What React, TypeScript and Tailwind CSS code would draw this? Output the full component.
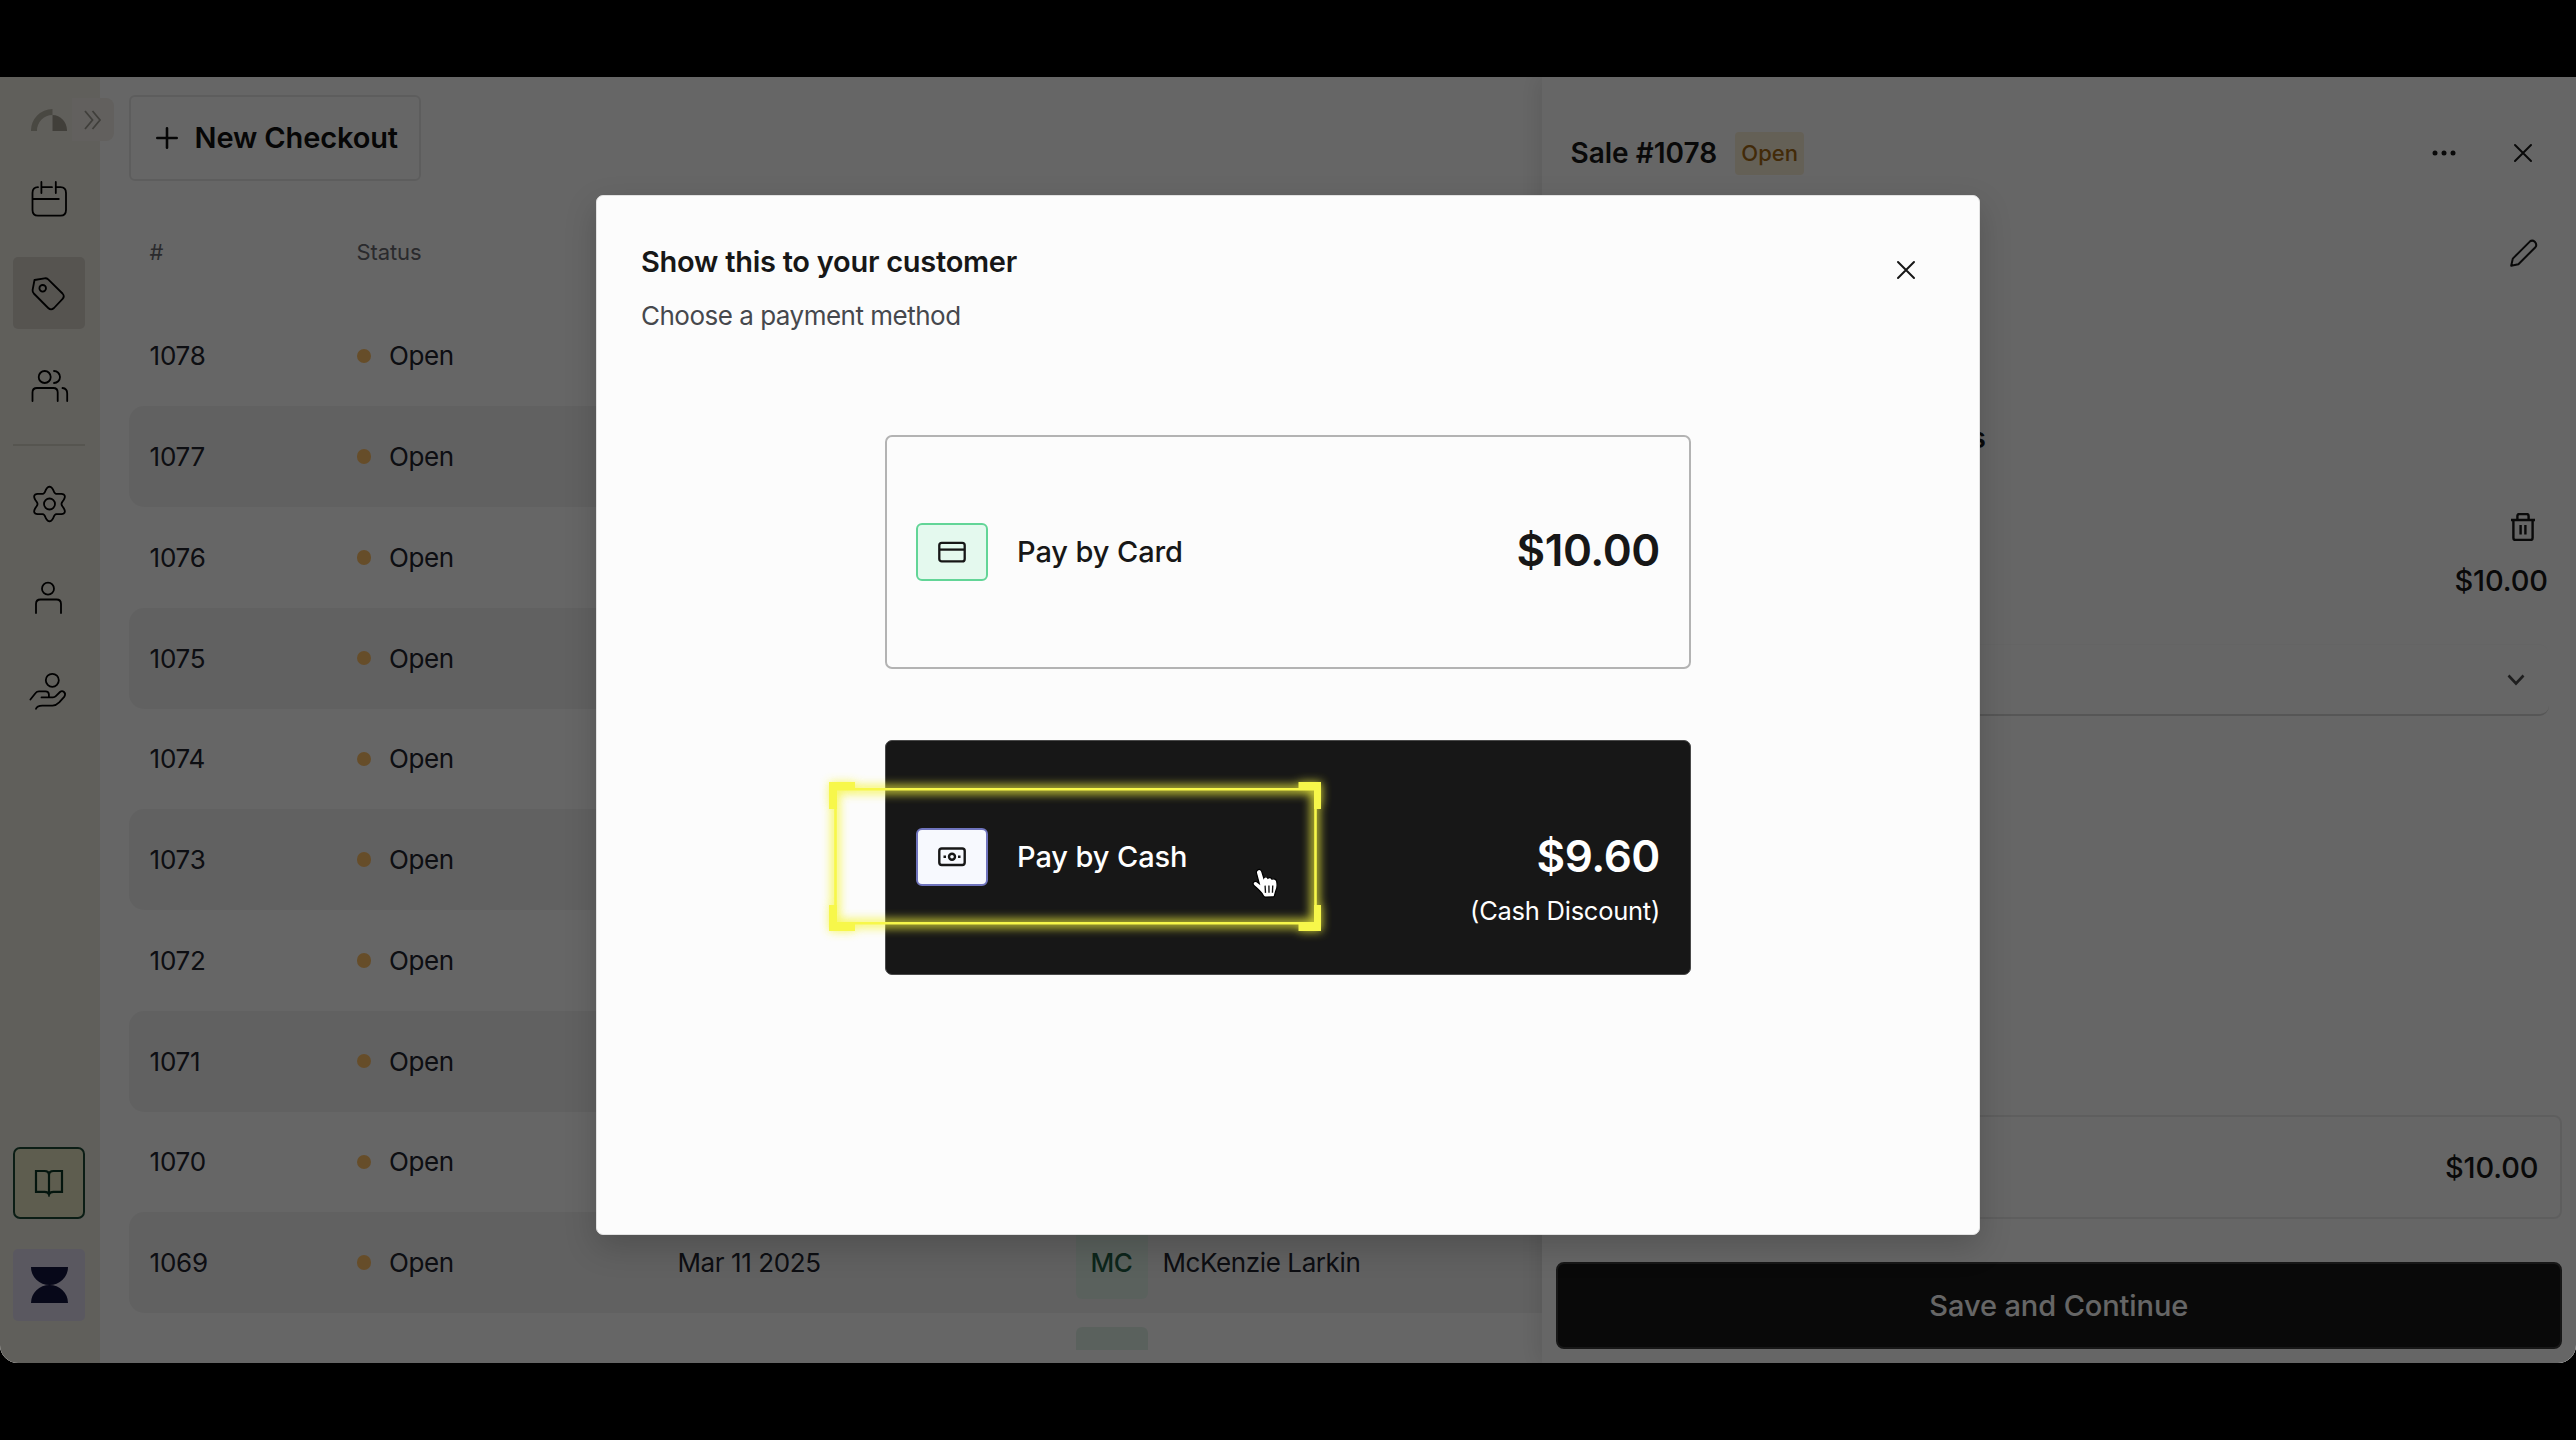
import React from 'react';

interface Sale {
  id: string;
  date?: string;
  initials?: string;
  customer?: string;
}

const sales: Sale[] = [
  { id: "1078" },
  { id: "1077" },
  { id: "1076" },
  { id: "1075" },
  { id: "1074" },
  { id: "1073" },
  { id: "1072" },
  { id: "1071" },
  { id: "1070" },
  { id: "1069", date: "Mar 11 2025", initials: "MC", customer: "McKenzie Larkin" },
  { id: "" },
];

// Six-lobed outline for the settings icon
const gearPath =
  Array.from({ length: 73 }, (_, i) => {
    const a = (i * 5 * Math.PI) / 180;
    const lobe = (1 + Math.cos(6 * (a - Math.PI / 2))) / 2;
    const r = 12 + 5.4 * Math.pow(lobe, 1.15);
    const x = 20.5 + r * Math.cos(a);
    const y = 20 - r * Math.sin(a);
    return `${i === 0 ? 'M' : 'L'}${x.toFixed(2)} ${y.toFixed(2)}`;
  }).join(' ') + 'Z';

function Icon({ children }: { children: React.ReactNode }) {
  return (
    <svg
      viewBox="0 0 40 40"
      fill="none"
      stroke="currentColor"
      strokeWidth="1.8"
      strokeLinecap="round"
      strokeLinejoin="round"
      className="w-10 h-10"
    >
      {children}
    </svg>
  );
}

function NavItem({ active, children }: { active?: boolean; children: React.ReactNode }) {
  return (
    <div
      className={`w-[72px] h-[72px] flex-none rounded-[5px] flex items-center justify-center ${
        active ? 'bg-[#d6d2c9]' : ''
      }`}
    >
      <Icon>{children}</Icon>
    </div>
  );
}

function CloseIcon() {
  return (
    <svg viewBox="0 0 20 20" fill="none" stroke="currentColor" strokeWidth="2" strokeLinecap="round" className="w-5 h-5">
      <path d="M2 2 18 18M18 2 2 18" />
    </svg>
  );
}

function Sidebar() {
  return (
    <aside className="relative w-[99.5px] pr-px flex-none bg-[#f1ede4] flex flex-col items-center text-black">
      {/* Collapse tab */}
      <div className="absolute left-[72px] top-[21px] w-[42px] h-[43px] rounded-r-lg bg-[#f4f0ea] flex items-center pl-3">
        <svg viewBox="0 0 18 20" fill="none" stroke="#a09d95" strokeWidth="1.8" className="w-[18px] h-5">
          <path d="M1 1 8.5 10 1 19M8.5 1 16 10 8.5 19" />
        </svg>
      </div>

      {/* Logo */}
      <svg viewBox="0 0 36 22" fill="#b7b3a6" className="relative w-9 h-[22px] mt-8 flex-none">
        <path d="M0 22A21.5 21.5 0 0 1 21.5 0V6A15.5 15.5 0 0 0 6 22Z" />
        <path d="M21.5 6A14.5 15.5 0 0 1 36 22H21.5Z" fill="#a39f92" />
      </svg>

      <nav className="mt-8 flex flex-col items-center gap-[21.5px]">
        <NavItem>
          <path d="M9 8.2Q3.5 8.2 3.5 14V31Q3.5 36.7 9 36.7H31.5Q37 36.7 37 31V14Q37 8.2 31.5 8.2H26.8M12.4 8.2H23M12.4 3V14M26.8 3V14M3.5 20H29.8" />
        </NavItem>
        <NavItem active>
          <path d="M5.5 7 15.5 5.3Q17.7 5 19.2 6.4L33.5 20.5Q36 23.2 33.6 25.8L25 35Q22 37.8 19.2 35L4.8 20.5Q3.4 19 3.6 17Z" />
          <circle cx="13.7" cy="15.3" r="3.3" />
        </NavItem>
        <NavItem>
          <circle cx="15.7" cy="11" r="6" />
          <path d="M25 5A6 6 0 0 1 25 17M3.5 35V26.5Q3.5 22 8 22H24.2Q28.7 22 28.7 26.5V35M33.5 22Q38.2 22.5 38.2 27.5V35" />
        </NavItem>
      </nav>

      <div className="w-[72px] h-[2px] my-[22px] bg-[#d8d4c8] flex-none" />

      <div className="flex flex-col items-center gap-[21.5px]">
        <NavItem>
          <path d={gearPath} />
          <circle cx="20.5" cy="20" r="5.5" />
        </NavItem>
        <NavItem>
          <circle cx="19" cy="10.7" r="6" />
          <path d="M7 35V26Q7 21.5 11.5 21.5H27.5Q32 21.5 32 26V35" />
        </NavItem>
        <NavItem>
          <circle cx="23.3" cy="9.3" r="6.5" />
          <path d="M1.4 28.5 6.6 22Q7.8 20.4 10 20.4H16.5Q19.8 20.4 19.9 23.5V26.4H12.5M19.9 26.4H24Q25.6 26.4 26.8 25.2L31 21Q33 19.2 35 21T35.4 25.6L30.2 31.4Q27 34.6 23.5 34.6H14Q8 34.4 7 37.8" />
        </NavItem>
      </div>

      <div className="mt-auto w-[72px] h-[72px] flex-none rounded-[7px] border-2 border-[#1c4a35] bg-[#ece8c6] flex items-center justify-center text-[#0b3524]">
        <svg viewBox="0 0 30 28" fill="none" stroke="currentColor" strokeWidth="2.2" className="w-[30px] h-7">
          <path d="M15 25.5Q14.2 22.8 10.5 22.8H2V2H10.5Q15 2 15 6Q15 2 19.5 2H28V22.8H19.5Q15.8 22.8 15 25.5ZV6" />
        </svg>
      </div>
      <div className="mt-[30px] mb-[42.5px] w-[72px] h-[72px] flex-none rounded-[5px] bg-[#e0dcf0] flex items-center justify-center">
        <svg viewBox="0 0 37 36" fill="#12143f" className="w-[37px] h-9">
          <path d="M0 0H37A18.5 18 0 0 1 0 0ZM0 36A18.5 18 0 0 1 37 36Z" />
        </svg>
      </div>
    </aside>
  );
}

function SalesTable() {
  return (
    <main className="flex-1 min-w-0 pl-[29px] pt-[18px] flex flex-col overflow-hidden">
      <button className="w-[292px] h-[86px] flex-none rounded-md border-2 border-[#e9e9e9] flex items-center pl-[25px] text-[29px] font-semibold text-[#111]">
        <svg viewBox="0 0 22 22" stroke="currentColor" strokeWidth="2.6" strokeLinecap="round" className="w-[22px] h-[22px] mr-[17px]">
          <path d="M11 1.3V20.7M1.3 11H20.7" />
        </svg>
        <span className="whitespace-nowrap tracking-[-0.14px]">New Checkout</span>
      </button>

      {/* Header row */}
      <div className="mt-[19px] h-[105.5px] flex-none flex items-center pl-[21px] text-[22px] tracking-[-0.1px] text-[#6a6a70]">
        <span className="w-[207px]">#</span>
        <span>Status</span>
      </div>

      <div className="flex-1 min-h-0 overflow-hidden mb-[13px]">
        {sales.map((sale, index) => (
          <div
            key={sale.id}
            className={`h-[100.75px] rounded-l-[15px] flex items-center pl-[21px] text-[26px] tracking-[-0.4px] text-[#22232e] ${
              index % 2 === 1 ? 'bg-[#f3f3f3]' : ''
            }`}
          >
            <span className="w-[207px] flex-none tracking-[-0.2px]">{sale.id}</span>
            <span className="w-[321px] flex-none flex items-center">
              {sale.id && <span className="w-[14.5px] h-[14.5px] mr-[18px] rounded-full bg-[#ffc067]" />}
              {sale.id && 'Open'}
            </span>
            <span className="w-[398px] flex-none">{sale.date}</span>
            <span className="w-[72px] h-[72px] flex-none rounded-md bg-[#e2f3e9] flex items-center justify-center font-medium text-[#1f5c44]">
              {sale.initials}
            </span>
            <span className="ml-[15px] whitespace-nowrap">{sale.customer}</span>
          </div>
        ))}
      </div>
    </main>
  );
}

function SaleDrawer() {
  return (
    <section className="relative w-[1034.5px] flex-none bg-white shadow-[-4px_0_20px_rgba(0,0,0,0.1)] flex flex-col text-[29px] font-medium text-[#171717]">
      <header className="h-[152px] flex-none flex items-center pl-[29px] pr-[43px]">
        <h2 className="text-[28px] font-semibold whitespace-nowrap">Sale #1078</h2>
        <span className="ml-[18px] w-[69px] h-[43px] rounded bg-[#fbefd8] flex items-center justify-center text-[22px] text-[#a56a14]">
          Open
        </span>
        <svg viewBox="0 0 24 6" fill="currentColor" className="ml-auto w-6 h-1.5 mr-[57px]">
          <circle cx="3" cy="3" r="2.5" />
          <circle cx="12" cy="3" r="2.5" />
          <circle cx="21" cy="3" r="2.5" />
        </svg>
        <CloseIcon />
      </header>

      <div className="h-[204px] flex-none flex justify-end pt-2.5 pr-[38px]">
        <svg viewBox="0 0 28 28" fill="none" stroke="currentColor" strokeWidth="2" strokeLinejoin="round" className="w-7 h-7">
          <path d="M1.2 26.8 2.8 19.6 19.8 2.6Q22.2.6 24.8 2.8 27.4 5.6 25.4 8.2L8.4 25.2Z" />
        </svg>
      </div>

      <h3 className="w-[444.5px] -mt-[16px] flex-none text-right text-[28px] leading-[42px] font-semibold">Products</h3>

      <div className="mt-[54px] pr-[28px] flex flex-col items-end">
        <svg viewBox="0 0 26 28" fill="none" stroke="currentColor" strokeWidth="2.4" strokeLinejoin="round" className="w-[26px] h-7 mr-[12px]">
          <path d="M1 7H25M3.4 7V25Q3.4 27 5.4 27H20.6Q22.6 27 22.6 25V7M7.4 7V3Q7.4 1 9.4 1H16.6Q18.6 1 18.6 3V7M10.6 12V21.5M15.4 12V21.5" />
        </svg>
        <span className="mt-[18px] leading-[44px] tracking-[-0.1px]">$10.00</span>
      </div>

      <div className="mt-[41px] ml-[29px] mr-[27px] h-[72px] flex-none rounded-[10px] border-t border-t-[#fafafa] border-b-2 border-b-[#d8d8d8] flex items-center justify-end pr-[24px] text-[#4c4c4c]">
        <svg viewBox="0 0 18 12" fill="none" stroke="currentColor" strokeWidth="2.6" className="w-[18px] h-3">
          <path d="M1.5 1.5 9 9.5 16.5 1.5" />
        </svg>
      </div>

      <div className="mt-auto mx-[14px] h-[104px] flex-none rounded-lg border-2 border-[#ececec] flex items-center justify-end pt-px pr-[21.5px] tracking-[-0.1px]">
        $10.00
      </div>
      <button className="mt-[43px] mb-[14px] mx-[14px] h-[87px] flex-none rounded-lg border-2 border-[#3a3a3a] bg-[#171717] font-medium tracking-[-0.1px] text-white">
        Save and Continue
      </button>
    </section>
  );
}

// Glowing frame drawn round the cash option
function Highlight() {
  return (
    <svg
      viewBox="0 0 532 190"
      className="absolute left-[-77px] top-[20px] w-[532px] h-[190px] overflow-visible pointer-events-none"
    >
      <defs>
        <filter id="glow" x="-10%" y="-20%" width="120%" height="140%">
          <feGaussianBlur stdDeviation="5" />
        </filter>
      </defs>
      <g fill="none" stroke="#f5f53c" filter="url(#glow)" opacity="0.8">
        <path d="M26.5 28.5H506V162.5H26.5Z" strokeWidth="9" />
        <path d="M24 44V25H46M490 25H509V44M509 144V166.5H490M46 166.5H24V144" strokeWidth="8" />
      </g>
      <path d="M26.5 28.3H506.5V162.3H26.5Z" fill="none" stroke="#f7f74a" strokeWidth="2.6" />
      <path
        fill="#f7f74a"
        d="M20 21H46V28.5H28V48H20ZM489.5 21H512V48H505V29H489.5ZM20 170V144H28V162H46V170ZM489.5 170V162H505V144H512V170Z"
      />
    </svg>
  );
}

function HandCursor() {
  return (
    <svg viewBox="0 0 28 30" className="absolute left-[365px] top-[126px] w-[29px] h-[32px]">
      <path
        d="M6.2 2.6C8 1.2 9.8 2 10.4 4L12.3 10.2C13 8.6 15.6 8.6 16.3 10.4 17.5 9.2 19.6 9.6 20.2 11.2 22 10.4 24.4 11.4 24.8 13.4 25.5 17 25.5 20 23.8 23L22.6 27.4Q22.3 28.6 21 28.4L14 28.6Q12.6 28.6 11.8 27C9.5 22.8 5.2 19.8 2.6 17.2 1 15 3.2 12.6 5.6 13.8L8 15.6 5.2 5.2C5 4 5.3 3.2 6.2 2.6Z"
        fill="#fff"
        stroke="#000"
        strokeWidth="1.2"
      />
      <path d="M13.6 17.5 14 24.5M17.3 17.5 17.4 24.5M21 17.5 20.7 24.5" stroke="#111" strokeWidth="1.3" />
    </svg>
  );
}

function PaymentDialog() {
  return (
    <div className="w-[1384px] h-[1040px] rounded-[7px] bg-[#fcfcfc] border border-[#e2e2e2] shadow-[0_12px_32px_rgba(0,0,0,0.18)] flex flex-col text-[#171717]">
      <div className="flex justify-between pt-[44px] pl-[44px] pr-[63px]">
        <div>
          <h1 className="text-[29px] leading-[44px] font-semibold tracking-[-0.27px] whitespace-nowrap">
            Show this to your customer
          </h1>
          <p className="mt-[10px] text-[26px] leading-[44px] tracking-[-0.5px] text-[#46484d] whitespace-nowrap">
            Choose a payment method
          </p>
        </div>
        <div className="mt-[20px]">
          <CloseIcon />
        </div>
      </div>

      <div className="mt-[97px] ml-[288px] w-[806px] flex flex-col gap-[71px]">
        <div className="h-[234px] rounded-[7px] border-2 border-[#b3b3b3] flex items-center pl-[29px] pr-[29px]">
          <div className="w-[72px] h-[58px] rounded-[6px] border-2 border-[#62d597] bg-[#e4f9ee] flex items-center justify-center">
            <svg viewBox="0 0 28 22" fill="none" stroke="currentColor" strokeWidth="2.3" className="w-7 h-[22px]">
              <rect x="1.3" y="1.8" width="25.4" height="18.6" rx="2.5" />
              <path d="M1.3 8.6H26.7" />
            </svg>
          </div>
          <span className="ml-[29px] text-[29px] font-medium tracking-[-0.1px]">Pay by Card</span>
          <span className="ml-auto pb-[3px] text-[44px] leading-none font-semibold tracking-[-0.4px]">$10.00</span>
        </div>

        <div className="relative h-[235px] rounded-[7px] border border-[#4a4a4a] bg-[#171717] flex items-center pl-[30px] pr-[30px] text-white">
          <div className="w-[72px] h-[58px] rounded-[6px] border-2 border-[#6f74bd] bg-[#f7f9fe] text-[#171717] flex items-center justify-center">
            <svg viewBox="0 0 28 20" fill="none" stroke="currentColor" strokeWidth="2.4" className="w-7 h-5">
              <rect x="1.3" y="1.5" width="25.4" height="16.5" rx="2.5" />
              <circle cx="14" cy="9.8" r="3" />
              <path d="M5.5 9.8H8M20 9.8H22.5" />
            </svg>
          </div>
          <span className="ml-[29px] text-[29px] font-medium tracking-[-0.1px]">Pay by Cash</span>
          <div className="ml-auto pt-[46px] flex flex-col items-end">
            <span className="text-[44px] leading-[54px] font-semibold tracking-[-0.4px]">$9.60</span>
            <span className="mt-[8px] text-[25.5px] leading-[40px] tracking-[-0.25px]">(Cash Discount)</span>
          </div>
          <Highlight />
          <HandCursor />
        </div>
      </div>
    </div>
  );
}

export default function App() {
  return (
    <div className="w-[2576px] h-[1440px] bg-black pt-[77px] overflow-hidden font-['Inter',sans-serif]">
      <div className="relative w-full h-[1286px] rounded-b-[18px] overflow-hidden bg-white flex">
        <Sidebar />
        <SalesTable />
        <SaleDrawer />

        {/* Dimmed backdrop with the dialog over it */}
        <div className="absolute inset-0 bg-black/60 flex justify-center items-start pt-[117.5px]">
          <PaymentDialog />
        </div>
      </div>
    </div>
  );
}
